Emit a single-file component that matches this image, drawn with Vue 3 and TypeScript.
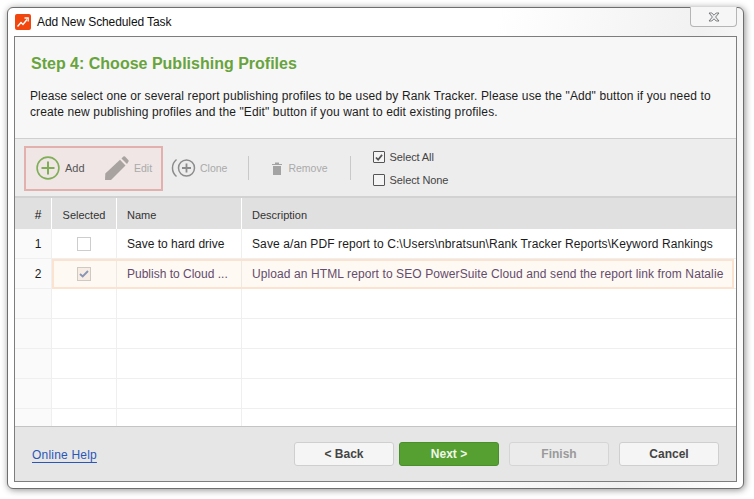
<script setup lang="ts">
interface Row { n: number; checked: boolean; name: string; desc: string; active: boolean }
const rows: Row[] = [
  { n: 1, checked: false, name: 'Save to hard drive', desc: 'Save a/an PDF report to C:\\Users\\nbratsun\\Rank Tracker Reports\\Keyword Rankings', active: false },
  { n: 2, checked: true, name: 'Publish to Cloud ...', desc: 'Upload an HTML report to SEO PowerSuite Cloud and send the report link from Natalie', active: true },
]
const blanks = [3, 4, 5, 6, 7]
</script>

<template>
  <div class="page">
    <div class="window">
      <div class="titlebar">
        <svg class="logo" width="16" height="16" viewBox="0 0 16 16">
          <rect width="16" height="16" rx="2" fill="#f2460f" />
          <path d="M2.5 12.5 L6 8.5 L8 10.5 L12 5.5" fill="none" stroke="#fff" stroke-width="1.4" />
          <path d="M9.5 4 H13.2 V7.6" fill="none" stroke="#fff" stroke-width="1.3" />
        </svg>
        <span class="wintitle">Add New Scheduled Task</span>
        <div class="close">
          <svg width="12" height="10" viewBox="0 0 12 10">
            <path d="M1 1 H3.8 L6 3.2 L8.2 1 H11 L7.6 5 L11 9 H8.2 L6 6.8 L3.8 9 H1 L4.4 5 Z" fill="#eef0f2" stroke="#6d6d6d" stroke-width="0.9" />
          </svg>
        </div>
      </div>
      <div class="panel">
        <div class="intro">
          <h1>Step 4: Choose Publishing Profiles</h1>
          <p>Please select one or several report publishing profiles to be used by Rank Tracker. Please use the "Add" button if you need to<br />create new publishing profiles and the "Edit" button if you want to edit existing profiles.</p>
        </div>
        <div class="toolbar">
          <div class="group">
            <div class="tool add">
              <svg width="24" height="24" viewBox="0 0 24 24">
                <circle cx="12" cy="12" r="10.9" fill="none" stroke="#7fae57" stroke-width="1.6" />
                <path d="M12 5.5 V18.5 M5.5 12 H18.5" stroke="#7fae57" stroke-width="2" />
              </svg>
              <span>Add</span>
            </div>
            <div class="tool edit">
              <svg width="24" height="24" viewBox="0 0 24 24">
                <path d="M0 24 L0.3 17.5 L15 3.8 L20.5 9.5 L6 24 Z" fill="#a8a3a0" />
                <path d="M16.5 2.4 L18.4 0.6 Q19.2 0 20 0.6 L23.5 4.2 Q24 5 23.4 5.7 L22 7.9 Z" fill="#a8a3a0" />
              </svg>
              <span>Edit</span>
            </div>
          </div>
          <div class="tool clone">
            <svg width="26" height="20" viewBox="0 0 26 20">
              <circle cx="15.5" cy="10" r="8" fill="none" stroke="#8c8c8c" stroke-width="1.5" />
              <path d="M15.5 5.5 V14.5 M11 10 H20" stroke="#8c8c8c" stroke-width="1.8" />
              <path d="M5.5 1.5 A11 11 0 0 0 5.5 18.5" fill="none" stroke="#8c8c8c" stroke-width="1.5" />
            </svg>
            <span>Clone</span>
          </div>
          <div class="sep sep1"></div>
          <div class="tool remove">
            <svg width="10" height="13" viewBox="0 0 10 13">
              <path d="M0 2 H3 V0.5 H7 V2 H10 V3 H0 Z M1 4 H9 V13 H1 Z" fill="#a3a3a3" />
            </svg>
            <span>Remove</span>
          </div>
          <div class="sep sep2"></div>
          <div class="selects">
            <label class="sel">
              <span class="tb">
                <svg width="8" height="7" viewBox="0 0 9 8"><path d="M1 4 L3.5 6.5 L8 1" fill="none" stroke="#555" stroke-width="2" /></svg>
              </span>
              Select All
            </label>
            <label class="sel"><span class="tb"></span>Select None</label>
          </div>
        </div>
        <div class="table">
          <div class="row head">
            <div class="c num hash">#</div>
            <div class="c sel-c">Selected</div>
            <div class="c name">Name</div>
            <div class="c desc">Description</div>
          </div>
          <div v-for="r in rows" :key="r.n" class="row body" :class="{ active: r.active }">
            <div class="c num">{{ r.n }}</div>
            <div class="c sel-c">
              <span class="cb">
                <svg v-if="r.checked" width="10" height="8" viewBox="0 0 10 8"><path d="M1 4 L3.7 6.5 L9 1" fill="none" stroke="#8296bd" stroke-width="1.9" /></svg>
              </span>
            </div>
            <div class="c name">{{ r.name }}</div>
            <div class="c desc">{{ r.desc }}</div>
          </div>
          <div v-for="b in blanks" :key="b" class="row body blank">
            <div class="c num"></div>
            <div class="c sel-c"></div>
            <div class="c name"></div>
            <div class="c desc"></div>
          </div>
        </div>
        <div class="footer">
          <a class="help">Online Help</a>
          <div class="buttons">
            <div class="pair">
              <button class="btn">&lt; Back</button>
              <button class="btn next">Next &gt;</button>
            </div>
            <button class="btn off">Finish</button>
            <button class="btn">Cancel</button>
          </div>
        </div>
      </div>
    </div>
  </div>
</template>

<style>
html, body { margin: 0; background: #fff; }
</style>

<style scoped>
.page {
  width: 754px;
  height: 499px;
  padding: 7px 0 0 7px;
  box-sizing: border-box;
  overflow: hidden;
  font-family: "Liberation Sans", Arial, sans-serif;
  color: #222;
}
.window {
  width: 737px;
  height: 482px;
  box-sizing: border-box;
  background: #fff;
  background-image: linear-gradient(100deg, #fff 60%, #f1f1f1 85%, #fff 100%);
  border: 1px solid #6e6e6e;
  border-radius: 6px;
  box-shadow: 1px 1px 7px rgba(0, 0, 0, 0.45);
  padding: 0 6px 6px 6px;
  display: flex;
  flex-direction: column;
}
.titlebar {
  height: 28px;
  display: flex;
  align-items: center;
  position: relative;
  flex: none;
}
.logo { margin: -1px 0 0 1px; }
.wintitle { margin: -1px 0 0 6px; font-size: 12px; color: #111; letter-spacing: -0.1px; }
.close {
  position: absolute;
  right: 0;
  top: -1px;
  width: 47px;
  height: 20px;
  box-sizing: border-box;
  border: 1px solid #b5b5b5;
  border-top: 0;
  border-radius: 0 0 4px 4px;
  display: flex;
  align-items: center;
  justify-content: center;
  background: #f6f6f6;
}
.panel {
  flex: 1;
  border: 1px solid #7d7d7d;
  background: #f7f7f7;
  display: flex;
  flex-direction: column;
  min-height: 0;
}
.intro { height: 101px; flex: none; padding: 0 15px; box-sizing: border-box; }
.intro h1 {
  margin: 0;
  padding-top: 18px;
  font-size: 16px;
  line-height: 18px;
  font-weight: 700;
  color: #68a33c;
  padding-left: 1px;
}
.intro p {
  margin: 15px 0 0;
  font-size: 12px;
  line-height: 16px;
  color: #1d1d1d;
  white-space: nowrap;
  letter-spacing: 0.12px;
}
.toolbar {
  height: 60px;
  flex: none;
  box-sizing: border-box;
  background: #ededed;
  border-top: 1px solid #cfcfcf;
  border-bottom: 2px solid #d2d2d2;
  display: flex;
  align-items: center;
  padding: 1px 0 0 9px;
  font-size: 10.5px;
}
.group {
  width: 139px;
  height: 45px;
  box-sizing: border-box;
  background: #efe6e5;
  border: 2px solid #e2b1ae;
  display: flex;
  align-items: center;
  padding-left: 10px;
}
.tool { display: flex; align-items: center; color: #aaa; }
.tool span { display: block; }
.add span { color: #555; margin-left: 5px; font-size: 11px; }
.add { width: 69px; }
.edit span { margin-left: 5px; }
.clone { margin-left: 8px; }
.clone span { margin-left: 3px; }
.sep { width: 1px; height: 24px; background: #c9c9c9; }
.sep1 { margin-left: 21px; }
.remove { margin-left: 23px; }
.remove span { margin-left: 6px; }
.sep2 { margin-left: 22px; }
.selects { margin: 1px 0 0 22px; display: flex; flex-direction: column; gap: 8px; font-size: 11px; letter-spacing: -0.1px; }
.sel { display: flex; align-items: center; color: #444; line-height: 15px; height: 15px; }
.tb {
  width: 12px;
  height: 12px;
  box-sizing: border-box;
  border: 1px solid #555;
  border-radius: 1px;
  background: #f4f4f4;
  margin-right: 5px;
  display: flex;
  align-items: center;
  justify-content: center;
}
.table { flex: 1; background: #fff; min-height: 0; overflow: hidden; }
.row { display: flex; height: 30px; box-sizing: border-box; }
.c { box-sizing: border-box; display: flex; align-items: center; flex: none; white-space: nowrap; overflow: hidden; }
.num { width: 37px; justify-content: center; padding-left: 10px; }
.sel-c { width: 65px; justify-content: center; }
.name { width: 125px; padding-left: 10px; }
.desc { flex: 1; padding-left: 10px; }
.body .desc { letter-spacing: 0.1px; }
.head { height: 31px; background: #e0e0e0; font-size: 11px; color: #333; padding: 0; }
.head .c { border-right: 1px solid #fff; padding-top: 3px; }
.head .desc { border-right: 0; }
.hash { font-size: 12px; color: #111; }
.body { font-size: 12px; color: #1c1c1c; border-bottom: 1px solid #efefef; }
.body .c { border-right: 1px solid #efefef; }
.body .num { background: #fafafa; }
.body .desc { border-right: 0; }
.active { position: relative; color: #5a4a70; }
.active::after {
  content: "";
  position: absolute;
  left: 37px;
  right: 2px;
  top: 0;
  bottom: -1px;
  border: 2px solid #fbe3cf;
  background: rgba(255, 143, 40, 0.05);
  pointer-events: none;
}
.active .num { color: #1c1c1c; }
.cb {
  width: 14px;
  height: 14px;
  box-sizing: border-box;
  border: 1px solid #cdcdcd;
  background: #fff;
  display: flex;
  align-items: center;
  justify-content: center;
}
.active .cb { background: #f7f3f0; }
.footer {
  height: 55px;
  flex: none;
  box-sizing: border-box;
  background: #e6e6e6;
  border-top: 1px solid #c4c4c4;
  display: flex;
  align-items: center;
  padding: 0 17px;
  justify-content: space-between;
}
.help {
  color: #2a56b8;
  font-size: 12px;
  letter-spacing: 0.2px;
  text-decoration: underline;
  text-underline-offset: 3px;
  margin-top: 1px;
}
.buttons { display: flex; gap: 10px; }
.pair { display: flex; gap: 5px; }
.btn {
  width: 100px;
  height: 24px;
  box-sizing: border-box;
  border: 1px solid #cfcfcf;
  border-radius: 3px;
  background: #f5f5f5;
  font-family: "Liberation Sans", sans-serif;
  font-size: 12px;
  font-weight: 700;
  color: #444;
  padding: 0;
}
.next { background: #56a032; border-color: #4a8f2a; color: #eef7e6; }
.off { background: #ebebeb; color: #9a9a9a; border-color: #d5d5d5; }
</style>
